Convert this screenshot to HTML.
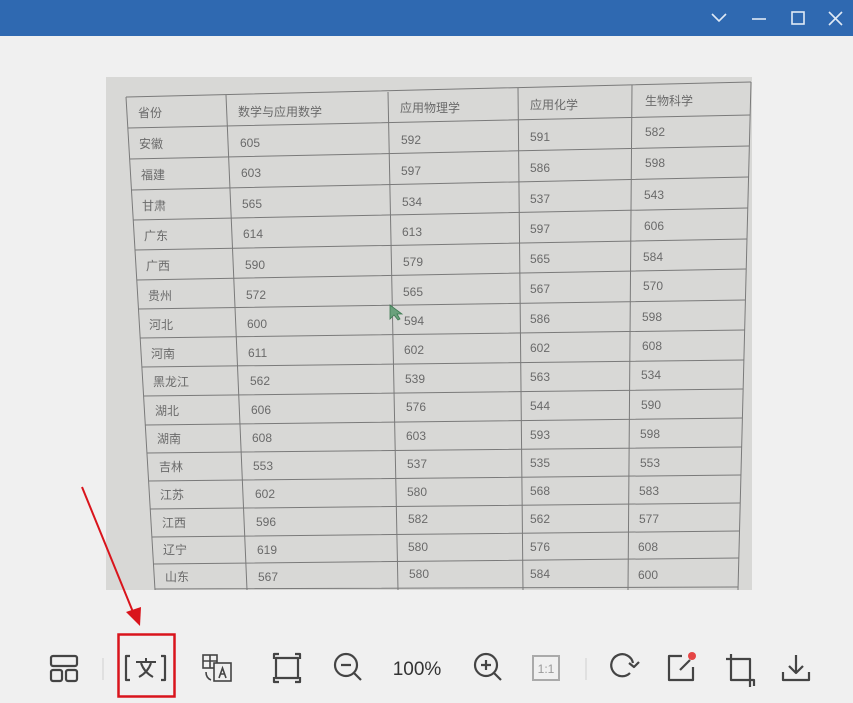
<!DOCTYPE html>
<html><head><meta charset="utf-8"><style>
html,body{margin:0;padding:0}
body{width:853px;height:703px;background:#f0f0f0;position:relative;overflow:hidden;font-family:"Liberation Sans","Noto Sans CJK SC",sans-serif}
#title{position:absolute;left:0;top:0;width:853px;height:36px;background:#2f69b1}
svg{position:absolute;left:0;top:0}
</style></head><body>
<div id="title"></div>
<svg width="853" height="703" viewBox="0 0 853 703">
<g stroke="#dfe9f5" stroke-width="1.6" fill="none">
<path d="M712 14l7 7 7-7"/>
<path d="M752 19h14"/>
<rect x="792" y="12" width="12" height="12"/>
<path d="M829 12l13 13M842 12l-13 13"/>
</g>
<rect x="106" y="77" width="646" height="513" fill="#d8d8d6"/>
<g stroke="#7a7a7a" stroke-width="1" fill="none">
<path d="M126 97L751 82M127.8 128L750 115M129.7 159L749 146M131.5 190L748.5 177M133.3 220L747.7 208M135 250L746.9 239M136.8 280L746 269M138.5 309L745.3 300M140.2 338L744.5 330M142 367L743.7 360M143.6 396L743 389M145.4 425L742.2 418M147 453L741.5 447M148.7 481L740.7 475M150.3 509L740 503M152 537L739.3 531M153.6 564L738.6 558M155 589L738 587"/>
<path d="M126 97L155 590M226 95L247 590M388 92L398 590M518 88L523 590M632 85L628 590M751 82L738 590"/>
</g>
<g font-size="12" fill="#6a6a6a" font-family="Liberation Sans,Noto Sans CJK SC,sans-serif">
<text x="138" y="117">省份</text><text x="238" y="116">数学与应用数学</text><text x="400" y="112">应用物理学</text><text x="530" y="109">应用化学</text><text x="645" y="105">生物科学</text>
<text x="139" y="148">安徽</text><text x="240" y="147">605</text><text x="401" y="144">592</text><text x="530" y="141">591</text><text x="645" y="136">582</text>
<text x="141" y="179">福建</text><text x="241" y="177">603</text><text x="401" y="175">597</text><text x="530" y="172">586</text><text x="645" y="167">598</text>
<text x="142" y="210">甘肃</text><text x="242" y="208">565</text><text x="402" y="206">534</text><text x="530" y="203">537</text><text x="644" y="199">543</text>
<text x="144" y="240">广东</text><text x="243" y="238">614</text><text x="402" y="236">613</text><text x="530" y="233">597</text><text x="644" y="230">606</text>
<text x="146" y="270">广西</text><text x="245" y="269">590</text><text x="403" y="266">579</text><text x="530" y="263">565</text><text x="643" y="261">584</text>
<text x="148" y="300">贵州</text><text x="246" y="299">572</text><text x="403" y="296">565</text><text x="530" y="293">567</text><text x="643" y="290">570</text>
<text x="149" y="329">河北</text><text x="247" y="328">600</text><text x="404" y="325">594</text><text x="530" y="323">586</text><text x="642" y="321">598</text>
<text x="151" y="358">河南</text><text x="248" y="357">611</text><text x="404" y="354">602</text><text x="530" y="352">602</text><text x="642" y="350">608</text>
<text x="153" y="386">黑龙江</text><text x="250" y="385">562</text><text x="405" y="383">539</text><text x="530" y="381">563</text><text x="641" y="379">534</text>
<text x="155" y="415">湖北</text><text x="251" y="414">606</text><text x="406" y="411">576</text><text x="530" y="410">544</text><text x="641" y="409">590</text>
<text x="157" y="443">湖南</text><text x="252" y="442">608</text><text x="406" y="440">603</text><text x="530" y="439">593</text><text x="640" y="438">598</text>
<text x="159" y="471">吉林</text><text x="253" y="470">553</text><text x="407" y="468">537</text><text x="530" y="467">535</text><text x="640" y="467">553</text>
<text x="160" y="499">江苏</text><text x="255" y="498">602</text><text x="407" y="496">580</text><text x="530" y="495">568</text><text x="639" y="495">583</text>
<text x="162" y="527">江西</text><text x="256" y="526">596</text><text x="408" y="523">582</text><text x="530" y="523">562</text><text x="639" y="523">577</text>
<text x="163" y="554">辽宁</text><text x="257" y="554">619</text><text x="408" y="551">580</text><text x="530" y="551">576</text><text x="638" y="551">608</text>
<text x="165" y="581">山东</text><text x="258" y="581">567</text><text x="409" y="578">580</text><text x="530" y="578">584</text><text x="638" y="579">600</text>
</g>
<path d="M390 305l0 14 4-4 4 5 2-1-3-5 5 0z" fill="#6aa17c" stroke="#3d7a52" stroke-width="0.8"/>
<path d="M82 487L133 612" stroke="#d9141c" stroke-width="2" fill="none"/>
<path d="M126 612l14 14 1-19z" fill="#d9141c"/>
<rect x="118.5" y="634.5" width="56" height="62" fill="none" stroke="#d9141c" stroke-width="2.5"/>
<g stroke="#444" stroke-width="2.2" fill="none" stroke-linejoin="round">
<rect x="51" y="656" width="26" height="10" rx="2"/><rect x="51" y="670" width="11" height="11" rx="2"/><rect x="66" y="670" width="11" height="11" rx="2"/>
<path d="M130 656h-4v24h4M161 656h4v24h-4"/>
<path d="M136 662h20M146 658v4M141 663q3 9 12 14M151 663q-3 9-12 14" stroke-width="2"/>
<rect x="276" y="658" width="22" height="20"/>
<path d="M279 654h-5v5M295 654h5v5M279 682h-5v-5M295 682h5v-5"/>
<circle cx="346" cy="665" r="11"/><path d="M354 673l7 7M341 665h10"/>
<circle cx="486" cy="665" r="11"/><path d="M494 673l7 7M481 665h10M486 660v10"/>
<path d="M633 663a11 11 0 1 0 -3 10" /><path d="M629 663l5 4 5-5"/>
<path d="M682 656h-13v24h24v-13M680 670l10-10"/>
<path d="M731 654v26h23v6M726 659h24v28"/>
<path d="M796 655v17M789 666l7 7 7-7M783 672v8h26v-8"/>
</g>
<g stroke="#444" stroke-width="1.6" fill="none">
<rect x="203" y="655" width="14" height="13"/><path d="M203 661h14M210 655v13"/>
<rect x="214" y="663" width="17" height="18" fill="#f0f0f0"/>
<path d="M219 678l3.5-10 3.5 10M220.5 674h4"/>
<path d="M206 672q0 6 5 8"/>
</g>
<circle cx="692" cy="656" r="4" fill="#e54545"/>
<rect x="533" y="656" width="26" height="24" fill="none" stroke="#aaa" stroke-width="2"/>
<text x="546" y="673" text-anchor="middle" font-size="12" fill="#999" font-family="Liberation Sans,sans-serif">1:1</text>
<text x="417" y="675" text-anchor="middle" font-size="19" fill="#333" font-family="Liberation Sans,sans-serif">100%</text>
<path d="M103 658v22M586 658v22" stroke="#cfcfcf" stroke-width="1"/>
</svg>
</body></html>
